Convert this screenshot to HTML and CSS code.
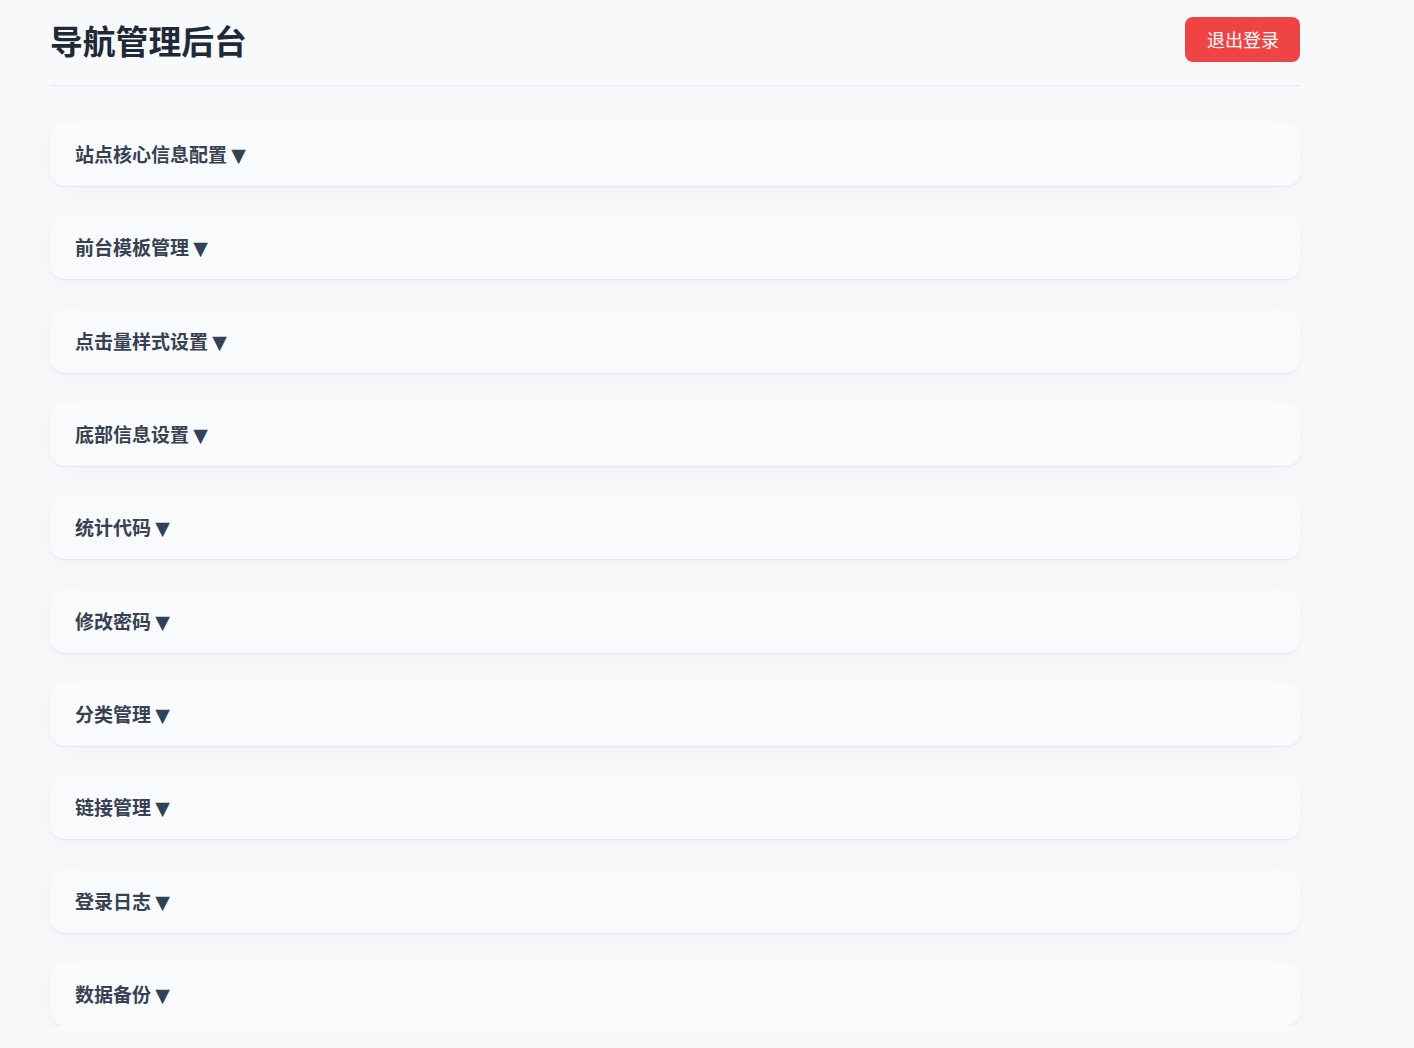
FILE: index.html
```html
<!DOCTYPE html>
<html lang="zh-CN">
<head>
<meta charset="utf-8">
<title>导航管理后台</title>
<link rel="stylesheet" href="styles.css">
</head>
<body>
<div class="container">
  <header class="header">
    <h1 class="title">导航管理后台</h1>
    <button class="logout">退出登录</button>
  </header>
  <main class="sections">
    <div class="card">站点核心信息配置 <span class="arrow">▼</span></div>
    <div class="card">前台模板管理 <span class="arrow">▼</span></div>
    <div class="card">点击量样式设置 <span class="arrow">▼</span></div>
    <div class="card">底部信息设置 <span class="arrow">▼</span></div>
    <div class="card">统计代码 <span class="arrow">▼</span></div>
    <div class="card">修改密码 <span class="arrow">▼</span></div>
    <div class="card">分类管理 <span class="arrow">▼</span></div>
    <div class="card">链接管理 <span class="arrow">▼</span></div>
    <div class="card">登录日志 <span class="arrow">▼</span></div>
    <div class="card">数据备份 <span class="arrow">▼</span></div>
  </main>
</div>
</body>
</html>
```

FILE: styles.css
```css
html, body {
  margin: 0;
  padding: 0;
  background: #f8f9fb;
  font-family: "Noto Sans CJK SC", "Noto Sans", sans-serif;
}
.container {
  max-width: 1250px;
  padding: 0 50px;
}
.header {
  display: flex;
  align-items: center;
  justify-content: space-between;
  padding: 17px 0 23px;
  border-bottom: 1px solid #e3e6ec;
}
.title {
  margin: 0;
  font-size: 32.8px;
  line-height: 45px;
  font-weight: 700;
  color: #1f2937;
}
.logout {
  background: #ef4444;
  color: #ffffff;
  border: none;
  border-radius: 8px;
  padding: 10px 21px 10px 22px;
  font-family: inherit;
  font-size: 18px;
  line-height: 25px;
  font-weight: 400;
}
.sections {
  display: flex;
  flex-direction: column;
  gap: 29.33px;
  margin-top: 36px;
}
.card {
  background: #f8fafc;
  border-radius: 14px;
  padding: 20px 25px;
  height: 24px;
  font-size: 19px;
  line-height: 24px;
  font-weight: 700;
  color: #374151;
  box-shadow: 0 1px 1px rgba(30, 50, 120, 0.08), 0 4px 22px rgba(0, 0, 0, 0.035);
}
.arrow {
  font-family: "DejaVu Sans", sans-serif;
  font-weight: 400;
  color: #334155;
}
```
